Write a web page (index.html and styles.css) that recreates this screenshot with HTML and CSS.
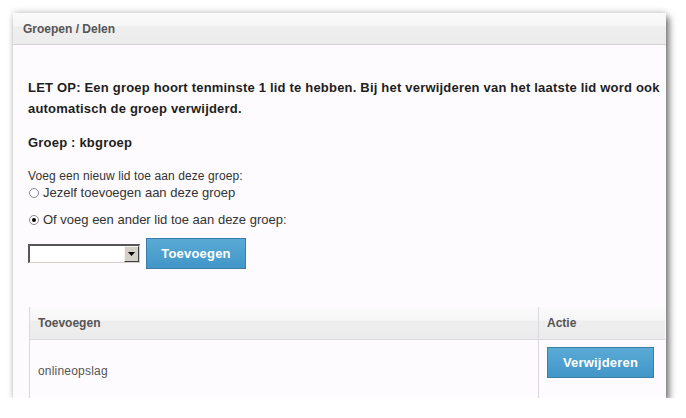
FILE: index.html
```html
<!DOCTYPE html>
<html>
<head>
<meta charset="utf-8">
<link rel="stylesheet" href="styles.css">
</head>
<body>
<div class="panel">
  <div class="panel-head">Groepen / Delen</div>
  <div class="panel-body">
    <p class="warn">LET OP: Een groep hoort tenminste 1 lid te hebben. Bij het verwijderen van het laatste lid word ook automatisch de groep verwijderd.</p>
    <p class="group">Groep : kbgroep</p>
    <div class="add-label">Voeg een nieuw lid toe aan deze groep:</div>
    <div class="radio-row r1"><span class="radio"></span><span>Jezelf toevoegen aan deze groep</span></div>
    <div class="radio-row r2"><span class="radio checked"></span><span>Of voeg een ander lid toe aan deze groep:</span></div>
    <div class="add-row">
      <div class="select"><span class="select-btn"><svg width="9" height="5" viewBox="0 0 9 5"><path d="M1 0h7L4.5 4z" fill="#000"/></svg></span></div>
      <button class="btn btn-add">Toevoegen</button>
    </div>
  </div>
  <div class="table">
    <div class="trow thead">
      <div class="cell c1">Toevoegen</div>
      <div class="cell c2">Actie</div>
    </div>
    <div class="trow tbody">
      <div class="cell c1 name">onlineopslag</div>
      <div class="cell c2"><button class="btn btn-del">Verwijderen</button></div>
    </div>
  </div>
</div>
</body>
</html>
```

FILE: styles.css
```css
html, body {
  margin: 0;
  padding: 0;
  background: #ffffff;
}
body {
  font-family: "Liberation Sans", Arial, sans-serif;
  color: #222;
}
.panel {
  margin: 13px 0 0 13px;
  width: 653px;
  height: 385px;
  background: #fdfbfd;
  box-shadow: 3px 4px 7px rgba(0,0,0,0.55), 0 -2px 6px rgba(0,0,0,0.12);
  display: flex;
  flex-direction: column;
  overflow: hidden;
}
.panel-head {
  height: 32px;
  box-sizing: border-box;
  border-bottom: 1px solid #d6d2d6;
  background: linear-gradient(#fbfafb 0, #f7f6f7 40%, #efeeef 45%, #ececec 100%);
  padding-left: 10px;
  font-size: 12px;
  font-weight: bold;
  color: #555;
  line-height: 32px;
}
.panel-body {
  padding: 32px 0 0 15px;
}
.warn {
  margin: 0;
  font-size: 13px;
  font-weight: bold;
  letter-spacing: 0.2px;
  line-height: 21px;
  color: #1e1e1e;
  width: 640px;
}
.group {
  margin: 16px 0 0;
  font-size: 13px;
  font-weight: bold;
  letter-spacing: 0.2px;
  line-height: 16px;
  color: #1e1e1e;
}
.add-label {
  margin-top: 18px;
  font-size: 12px;
  letter-spacing: 0.1px;
  line-height: 14px;
  color: #333;
}
.radio-row {
  display: flex;
  align-items: center;
  gap: 4px;
  font-size: 13px;
  line-height: 15px;
  color: #333;
}
.r1 { margin-top: 2px; }
.r2 { margin-top: 12px; }
.radio {
  width: 10px;
  height: 10px;
  border-radius: 50%;
  border: 1px solid #8a8a8a;
  background: #fff;
  margin-left: 1px;
  box-sizing: border-box;
  position: relative;
}
.radio.checked::after {
  content: "";
  position: absolute;
  left: 2px;
  top: 2px;
  width: 4px;
  height: 4px;
  border-radius: 50%;
  background: #000;
}
.add-row {
  margin-top: 11px;
  display: flex;
  align-items: center;
  gap: 6px;
}
.select {
  width: 112px;
  height: 19px;
  box-sizing: border-box;
  border-top: 2px solid #555;
  border-left: 2px solid #555;
  border-right: 1px solid #d4d0c8;
  border-bottom: 1px solid #d4d0c8;
  background: #fff;
  display: flex;
  justify-content: flex-end;
}
.select-btn {
  width: 15px;
  height: 16px;
  box-sizing: border-box;
  background: #d4d0c8;
  border: 1px solid;
  border-color: #f4f4f4 #404040 #404040 #f4f4f4;
  display: flex;
  align-items: center;
  justify-content: center;
}
.btn {
  border: 1px solid #3b7fa9;
  background: linear-gradient(#5aaad5, #4196c8);
  color: #fff;
  font-family: "Liberation Sans", Arial, sans-serif;
  font-weight: bold;
  font-size: 13px;
  letter-spacing: 0.2px;
  padding: 0;
  margin: 0;
}
.btn-add {
  width: 100px;
  height: 31px;
}
.table {
  margin: 38px 1px 0 16px;
  flex: 1;
  display: flex;
  flex-direction: column;
  border-left: 1px solid #ddd8e0;
}
.trow {
  display: flex;
}
.thead {
  height: 33px;
  box-sizing: border-box;
  border-bottom: 1px solid #ddd8e0;
  background: linear-gradient(#fbfafb 0, #f7f6f7 40%, #efeeef 45%, #ececec 100%);
  font-size: 12px;
  font-weight: bold;
  color: #555;
}
.thead .cell {
  line-height: 32px;
}
.tbody {
  flex: 1;
}
.cell {
  box-sizing: border-box;
  padding-left: 8px;
}
.c1 {
  width: 509px;
  border-right: 1px solid #ddd8e0;
}
.c2 {
  flex: 1;
}
.name {
  font-size: 12px;
  letter-spacing: 0.2px;
  color: #555;
  display: flex;
  align-items: center;
  padding-top: 3px;
}
.tbody .c2 {
  padding-top: 7px;
}
.btn-del {
  width: 107px;
  height: 31px;
}
```
